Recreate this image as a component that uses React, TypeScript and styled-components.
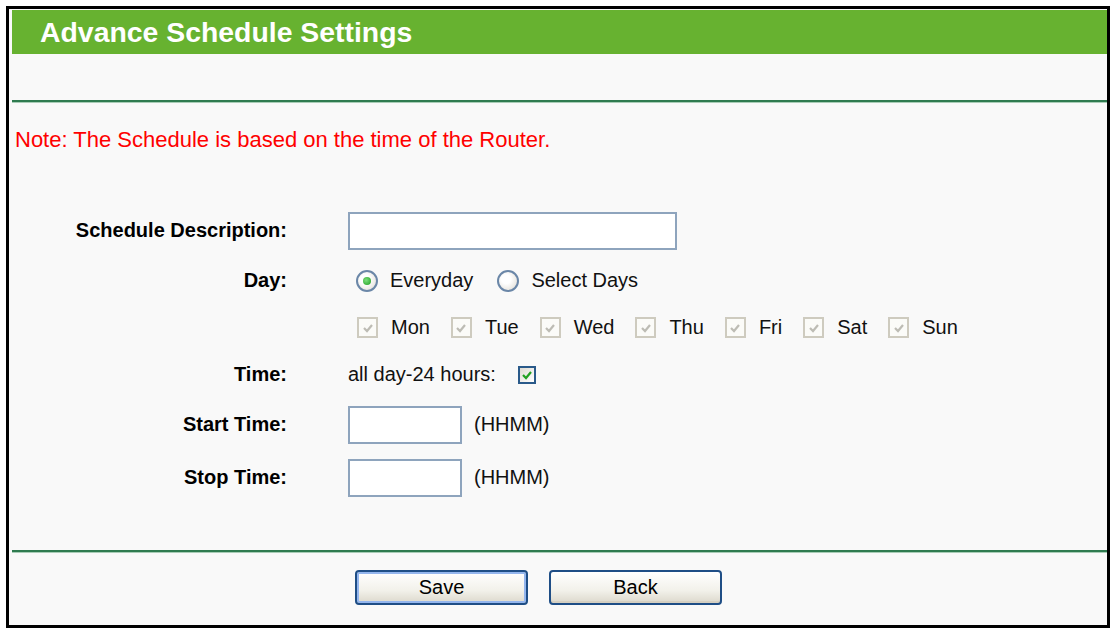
import React from 'react';
import styled, { createGlobalStyle } from 'styled-components';

const GlobalStyle = createGlobalStyle`
  body {
    margin: 0;
    background: #fff;
    font-family: "Liberation Sans", Arial, sans-serif;
  }
`;

const Page = styled.div`
  padding: 6px;
`;

const Panel = styled.div`
  box-sizing: border-box;
  width: 1104px;
  height: 622px;
  border: 3px solid #000;
  background: #f9f9f9;
  padding: 1px 0 0 3px;
  display: flex;
  flex-direction: column;
`;

const Header = styled.h1`
  margin: 0;
  height: 44px;
  background: #67b230;
  color: #fff;
  font-size: 28.4px;
  font-weight: bold;
  line-height: 44px;
  padding-left: 28px;
`;

const Band = styled.div`
  height: 46px;
`;

const Rule = styled.div<{ $top?: number }>`
  height: 3px;
  margin-top: ${(p) => p.$top ?? 0}px;
  background: linear-gradient(#2f7b50 0 2px, #a9cdb7 2px);
`;

const Note = styled.p`
  margin: 24px 0 0 3px;
  font-size: 22px;
  line-height: 26px;
  color: #f00;
`;

const Form = styled.div`
  margin-top: 51px;
  display: flex;
  flex-direction: column;
`;

const Row = styled.div<{ $h: number }>`
  display: grid;
  grid-template-columns: 275px 1fr;
  column-gap: 61px;
  align-items: center;
  min-height: ${(p) => p.$h}px;
`;

const Label = styled.div`
  text-align: right;
  font-size: 20px;
  font-weight: bold;
  color: #000;
`;

const Value = styled.div`
  display: flex;
  align-items: center;
  font-size: 20px;
  color: #111;
`;

const TextBox = styled.div<{ $w: number }>`
  box-sizing: border-box;
  width: ${(p) => p.$w}px;
  height: 38px;
  border: 2px solid #8ea4bd;
  background: #fff;
`;

const Hint = styled.span<{ $gap?: number }>`
  display: flex;
  margin-left: ${(p) => p.$gap ?? 12}px;
`;

const Option = styled.label`
  display: flex;
  align-items: center;
  gap: 12px;
  margin-left: 8px;
  margin-right: 16px;
`;

const Radio = styled.span<{ $on?: boolean }>`
  box-sizing: border-box;
  width: 22px;
  height: 22px;
  border-radius: 50%;
  border: 2px solid #6b87a8;
  background: radial-gradient(circle at 40% 40%, #fff 30%, #dcd8cf 100%);
  display: flex;
  align-items: center;
  justify-content: center;

  &::after {
    content: '';
    display: ${(p) => (p.$on ? 'block' : 'none')};
    width: 8px;
    height: 8px;
    border-radius: 50%;
    background: radial-gradient(circle at 40% 40%, #7be07b, #1e9b1e);
  }
`;

const Box = styled.span<{ $off?: boolean }>`
  box-sizing: border-box;
  width: ${(p) => (p.$off ? 21 : 18)}px;
  height: ${(p) => (p.$off ? 21 : 18)}px;
  border: ${(p) => (p.$off ? '2px solid #cecbbf' : '2px solid #2a5a8a')};
  background: ${(p) => (p.$off ? '#fbfbf8' : 'linear-gradient(135deg, #dedbd2, #fff)')};
  display: flex;
  align-items: center;
  justify-content: center;
`;

const DayList = styled.div`
  display: flex;
  align-items: center;
  gap: 21px;
  margin-left: 9px;
`;

const Day = styled.span`
  display: flex;
  align-items: center;
  gap: 13px;
`;

const Buttons = styled.div`
  display: flex;
  gap: 21px;
  margin-top: 17px;
  padding-left: 343px;
`;

const Button = styled.button<{ $focus?: boolean }>`
  width: 173px;
  height: 35px;
  font-family: inherit;
  font-size: 20px;
  color: #000;
  border: 2px solid #1f4e86;
  border-radius: 4px;
  background: linear-gradient(#fff 0%, #f2f1ea 60%, #dcd8cc 100%);
  box-shadow: ${(p) => (p.$focus ? 'inset 0 0 0 2px #94b6ee' : 'inset 0 -2px 0 #d6d0c2')};
`;

const Check = ({ color }: { color: string }) => (
  <svg width="12" height="12" viewBox="0 0 12 12">
    <path d="M2 6 L5 9 L10 3" fill="none" stroke={color} strokeWidth="2.2" />
  </svg>
);

const days = ['Mon', 'Tue', 'Wed', 'Thu', 'Fri', 'Sat', 'Sun'];

export default function App() {
  return (
    <Page>
      <GlobalStyle />
      <Panel>
        <Header>Advance Schedule Settings</Header>
        <Band />
        <Rule />
        <Note>Note: The Schedule is based on the time of the Router.</Note>
        <Form>
          <Row $h={53}>
            <Label>Schedule Description:</Label>
            <Value>
              <TextBox $w={329} />
            </Value>
          </Row>
          <Row $h={47}>
            <Label>Day:</Label>
            <Value>
              <Option>
                <Radio $on />
                Everyday
              </Option>
              <Option>
                <Radio />
                Select Days
              </Option>
            </Value>
          </Row>
          <Row $h={47}>
            <span />
            <Value>
              <DayList>
                {days.map((d) => (
                  <Day key={d}>
                    <Box $off>
                      <Check color="#bdbcb4" />
                    </Box>
                    {d}
                  </Day>
                ))}
              </DayList>
            </Value>
          </Row>
          <Row $h={47}>
            <Label>Time:</Label>
            <Value>
              all day-24 hours:
              <Hint $gap={22}>
                <Box>
                  <Check color="#21a121" />
                </Box>
              </Hint>
            </Value>
          </Row>
          <Row $h={53}>
            <Label>Start Time:</Label>
            <Value>
              <TextBox $w={114} />
              <Hint>(HHMM)</Hint>
            </Value>
          </Row>
          <Row $h={53}>
            <Label>Stop Time:</Label>
            <Value>
              <TextBox $w={114} />
              <Hint>(HHMM)</Hint>
            </Value>
          </Row>
        </Form>
        <Rule $top={46} />
        <Buttons>
          <Button $focus>Save</Button>
          <Button>Back</Button>
        </Buttons>
      </Panel>
    </Page>
  );
}
